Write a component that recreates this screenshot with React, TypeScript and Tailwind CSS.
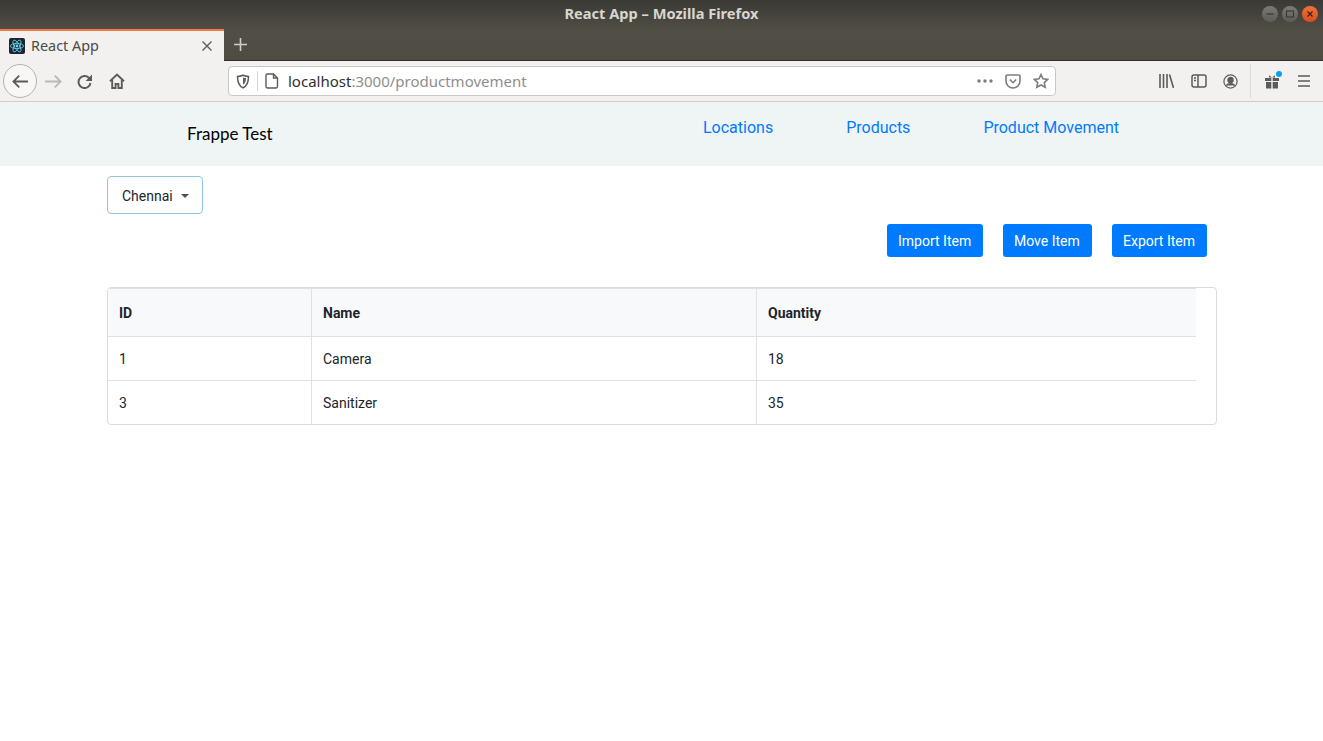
import React from "react";

const ic = "#5b5b5a";

function ReactLogo() {
  return (
    <svg width="16" height="16" viewBox="0 0 16 16" className="shrink-0">
      <rect width="16" height="16" rx="2" fill="#20232a" />
      <circle cx="8" cy="8" r="1.4" fill="#61dafb" />
      <g fill="none" stroke="#61dafb" strokeWidth="0.8">
        <ellipse cx="8" cy="8" rx="6.6" ry="2.6" />
        <ellipse cx="8" cy="8" rx="6.6" ry="2.6" transform="rotate(60 8 8)" />
        <ellipse cx="8" cy="8" rx="6.6" ry="2.6" transform="rotate(120 8 8)" />
      </g>
    </svg>
  );
}

function WindowButtons() {
  return (
    <div className="absolute right-[5px] top-[6px] flex gap-1">
      <div className="w-4 h-4 rounded-full flex items-center justify-center bg-gradient-to-b from-[#7c7b75] to-[#5c5b55]">
        <svg width="10" height="10" viewBox="0 0 10 10"><path d="M1.5 5h7" stroke="#35342f" strokeWidth="1.2" /></svg>
      </div>
      <div className="w-4 h-4 rounded-full flex items-center justify-center bg-gradient-to-b from-[#7c7b75] to-[#5c5b55]">
        <svg width="10" height="10" viewBox="0 0 10 10"><rect x="1.5" y="2" width="7" height="6" fill="none" stroke="#35342f" strokeWidth="1" /></svg>
      </div>
      <div className="w-4 h-4 rounded-full flex items-center justify-center bg-gradient-to-b from-[#f0703a] to-[#d84e1c]">
        <svg width="10" height="10" viewBox="0 0 10 10"><path d="M2.5 2.5l5 5M7.5 2.5l-5 5" stroke="#3d2015" strokeWidth="1.2" /></svg>
      </div>
    </div>
  );
}

function BrowserChrome() {
  return (
    <div className="bg-gradient-to-b from-[#3a3935] via-[#514e46] to-[#4f4c44]">
      <div className="h-[29px] flex items-center justify-center relative">
        <span className="text-[14.6px] font-bold text-[#d8d6d0] font-['Noto_Sans',sans-serif] leading-none mt-[-2px]">React App – Mozilla Firefox</span>
        <WindowButtons />
      </div>
      <div className="h-[32px] flex border-b border-[#2f2e2a]">
        <div className="w-[224px] h-[32px] bg-[#f2f1ef] border-t-2 border-[#f2774a] flex items-center pl-[9px] pr-[11px] shrink-0">
          <ReactLogo />
          <span className="ml-[6px] text-[14.4px] text-[#4a4a48] font-['Noto_Sans',sans-serif] leading-none flex-1">React App</span>
          <svg width="12" height="12" viewBox="0 0 12 12"><path d="M1.5 1.5l9 9M10.5 1.5l-9 9" stroke={ic} strokeWidth="1.4" /></svg>
        </div>
        <div className="w-[32px] flex items-center justify-center">
          <svg width="15" height="15" viewBox="0 0 15 15"><path d="M7.5 1v13M1 7.5h13" stroke="#cfcdc7" strokeWidth="1.6" /></svg>
        </div>
      </div>
    </div>
  );
}

function Toolbar() {
  return (
    <div className="h-[41px] bg-[#f2f1ef] border-b border-[#cfcecb] flex items-center relative">
      <div className="ml-[3px] w-[34px] h-[34px] rounded-full border border-[#b3b2af] bg-[#f8f7f6] flex items-center justify-center shrink-0">
        <svg width="16" height="13" viewBox="0 0 16 13" fill="none" stroke={ic} strokeWidth="1.8"><path d="M16 6.500H1.500M7.200 .7L1.400 6.500l5.800 5.800" /></svg>
      </div>
      <div className="ml-[8px] shrink-0">
        <svg width="17" height="13" viewBox="0 0 17 13" fill="none" stroke="#b9b8b5" strokeWidth="1.8" className="block"><path d="M0 6.500h15.500M9.800 .7l5.800 5.800-5.800 5.800" /></svg>
      </div>
      <div className="ml-[15px] shrink-0">
        <svg width="16" height="15" viewBox="0 0 16 15" fill="none" stroke={ic} strokeWidth="2" className="block"><path d="M13.500 9a6 6 0 1 1-1.700-5.200L13.800 5.800" /><path d="M15 .6V7H8.600z" fill={ic} stroke="none" /></svg>
      </div>
      <div className="ml-[16px] shrink-0">
        <svg width="16" height="16" viewBox="0 0 16 16" fill="none" stroke={ic} strokeWidth="1.9" className="block"><path d="M1 8.200l7-6.700 7 6.700" /><path d="M3.200 7v8h3.400v-4h2.800v4h3.400V7" /></svg>
      </div>
      <div className="ml-[103px] w-[828px] h-[30px] bg-white border border-[#c9c8c5] rounded-[4px] flex items-center shrink-0">
        <svg width="14" height="15" viewBox="0 0 14 15" fill="none" stroke={ic} strokeWidth="1.5" className="ml-[7px] shrink-0"><path d="M7 1.200c2 .9 3.600 1.200 5.500 1.200 0 5-1 9.300-5.500 11.400C2.500 11.700 1.500 7.400 1.500 2.400 3.400 2.400 5 2.100 7 1.200z" /><path d="M7 3.500c1 .4 2 .6 3 .6 0 3-.7 5.300-3 6.600z" fill={ic} stroke="none" /></svg>
        <div className="ml-[7px] w-px h-[20px] bg-[#d5d4d1] shrink-0" />
        <svg width="14" height="16" viewBox="0 0 14 16" fill="none" stroke={ic} strokeWidth="1.4" className="ml-[7px] shrink-0"><path d="M2.500 1h6l4 4v8.500a1.500 1.500 0 0 1-1.500 1.500H2.500A1.500 1.500 0 0 1 1 13.500v-11A1.500 1.500 0 0 1 2.500 1zM8.500 1v4h4" /></svg>
        <span className="ml-[9px] text-[15px] leading-none font-['Noto_Sans',sans-serif] text-[#8e8e8d] whitespace-nowrap">
          <span className="text-[#2f2f2e]">localhost</span>:3000/productmovement
        </span>
        <div className="flex-1" />
        <svg width="16" height="4" viewBox="0 0 16 4" fill="#7d7d7c" className="shrink-0"><circle cx="2" cy="2" r="1.7" /><circle cx="8" cy="2" r="1.7" /><circle cx="14" cy="2" r="1.7" /></svg>
        <svg width="16" height="15" viewBox="0 0 16 15" fill="none" stroke="#7d7d7c" strokeWidth="1.6" className="ml-[12px] shrink-0"><path d="M2.200 1h11.600A1.200 1.200 0 0 1 15 2.200V7A7 7 0 0 1 1 7V2.200A1.200 1.200 0 0 1 2.200 1z" /><path d="M4.800 5.500L8 8.700l3.200-3.200" /></svg>
        <svg width="16" height="16" viewBox="0 0 16 16" fill="none" stroke="#7d7d7c" strokeWidth="1.6" className="ml-[12px] mr-[6px] shrink-0"><path d="M8 1.500l2 4.300 4.700.6-3.400 3.200.9 4.700L8 12l-4.200 2.300.9-4.700L1.300 6.400 6 5.800z" /></svg>
      </div>
      <div className="flex-1" />
      <svg width="15" height="14" viewBox="0 0 15 14" fill="none" stroke={ic} strokeWidth="1.6" className="shrink-0"><path d="M1 0v14M4.500 0v14M8 0v14M10.500 .5L14.500 14" /></svg>
      <svg width="16" height="14" viewBox="0 0 16 14" fill="none" stroke={ic} strokeWidth="1.5" className="ml-[17px] shrink-0"><rect x="1" y="1" width="14" height="12" rx="2" /><path d="M7 1v12M3 4h2M3 6.500h2" /></svg>
      <svg width="15" height="15" viewBox="0 0 15 15" fill="none" stroke={ic} strokeWidth="1.200" className="ml-[16px] shrink-0"><circle cx="7.500" cy="7.500" r="6.600" /><circle cx="7.500" cy="6" r="2.600" fill={ic} /><path d="M3 11.500c2-2.500 7-2.500 9 0" fill={ic} /></svg>
      <div className="ml-[12px] w-px h-[34px] bg-[#dddcd9] shrink-0" />
      <div className="ml-[14px] relative shrink-0">
        <svg width="14" height="15" viewBox="0 0 14 15" fill={ic} className="block"><path d="M0 4h6.300v3H0zM7.700 4H14v3H7.700zM1 8h5.300v6.500H1zM7.700 8H13v6.500H7.700zM4 1.200L7 3.500l3-2.300V3.600H4z" /></svg>
        <div className="absolute -top-[3px] -right-[3px] w-[6px] h-[6px] rounded-full bg-[#0a9df5]" />
      </div>
      <svg width="12" height="12" viewBox="0 0 12 12" stroke={ic} strokeWidth="1.5" className="ml-[19px] mr-[13px] shrink-0"><path d="M0 1h12M0 6h12M0 11h12" /></svg>
    </div>
  );
}

const rows = [
  { id: "1", name: "Camera", qty: "18", h: "h-[44px] border-b" },
  { id: "3", name: "Sanitizer", qty: "35", h: "h-[43px]" },
];

export default function App() {
  return (
    <div className="w-[1323px] h-[741px] overflow-hidden bg-white font-['Roboto',sans-serif] text-[#212529]">
      <BrowserChrome />
      <Toolbar />
      <nav className="h-[64px] bg-[#eff4f5] flex">
        <span className="ml-[187px] mt-[21px] text-[17px] leading-[22px] text-black font-['Lato',sans-serif] w-[516px] shrink-0">Frappe Test</span>
        <div className="flex gap-[73px] mt-[15px] text-[16px] leading-[22px] text-[#007bff]">
          <a>Locations</a>
          <a>Products</a>
          <a>Product Movement</a>
        </div>
      </nav>
      <main className="pt-[10px] pl-[107px] pr-[106px]">
        <button className="w-[96px] h-[38px] border border-[#8fc6dc] rounded-[4px] text-[14px] pt-[2px] pl-[14px] flex items-center text-[#212529]">
          Chennai
          <span className="ml-[8px] w-0 h-0 border-x-[4px] border-x-transparent border-t-[4px] border-t-[#495057]" />
        </button>
        <div className="mt-[10px] pr-[10px] flex justify-end gap-[20px] text-[14px] text-white">
          <button className="w-[96px] h-[33px] bg-[#007bff] rounded-[3px] pt-[2px] pl-[11px] flex items-center">Import Item</button>
          <button className="w-[89px] h-[33px] bg-[#007bff] rounded-[3px] pt-[2px] pl-[11px] flex items-center">Move Item</button>
          <button className="w-[95px] h-[33px] bg-[#007bff] rounded-[3px] pt-[2px] pl-[11px] flex items-center">Export Item</button>
        </div>
        <div className="mt-[30px] w-[1110px] h-[138px] border border-[#dcdcdc] rounded-[4px] overflow-hidden">
          <table className="w-[1088px] table-fixed border-separate border-spacing-0 text-[14px]">
            <colgroup>
              <col className="w-[204px]" />
              <col className="w-[445px]" />
              <col className="w-[439px]" />
            </colgroup>
            <thead>
              <tr className="bg-[#f8f9fa]">
                <th className="h-[49px] pl-[11px] pt-[2px] text-left font-bold border-t border-b border-r border-[#dee2e6]">ID</th>
                <th className="h-[49px] pl-[11px] pt-[2px] text-left font-bold border-t border-b border-r border-[#dee2e6]">Name</th>
                <th className="h-[49px] pl-[11px] pt-[2px] text-left font-bold border-t border-b border-[#dee2e6]">Quantity</th>
              </tr>
            </thead>
            <tbody>
              {rows.map((r) => (
                <tr key={r.id}>
                  <td className={`${r.h} pl-[11px] pt-[2px] border-r border-[#dee2e6]`}>{r.id}</td>
                  <td className={`${r.h} pl-[11px] pt-[2px] border-r border-[#dee2e6]`}>{r.name}</td>
                  <td className={`${r.h} pl-[11px] pt-[2px] border-[#dee2e6]`}>{r.qty}</td>
                </tr>
              ))}
            </tbody>
          </table>
        </div>
      </main>
    </div>
  );
}
